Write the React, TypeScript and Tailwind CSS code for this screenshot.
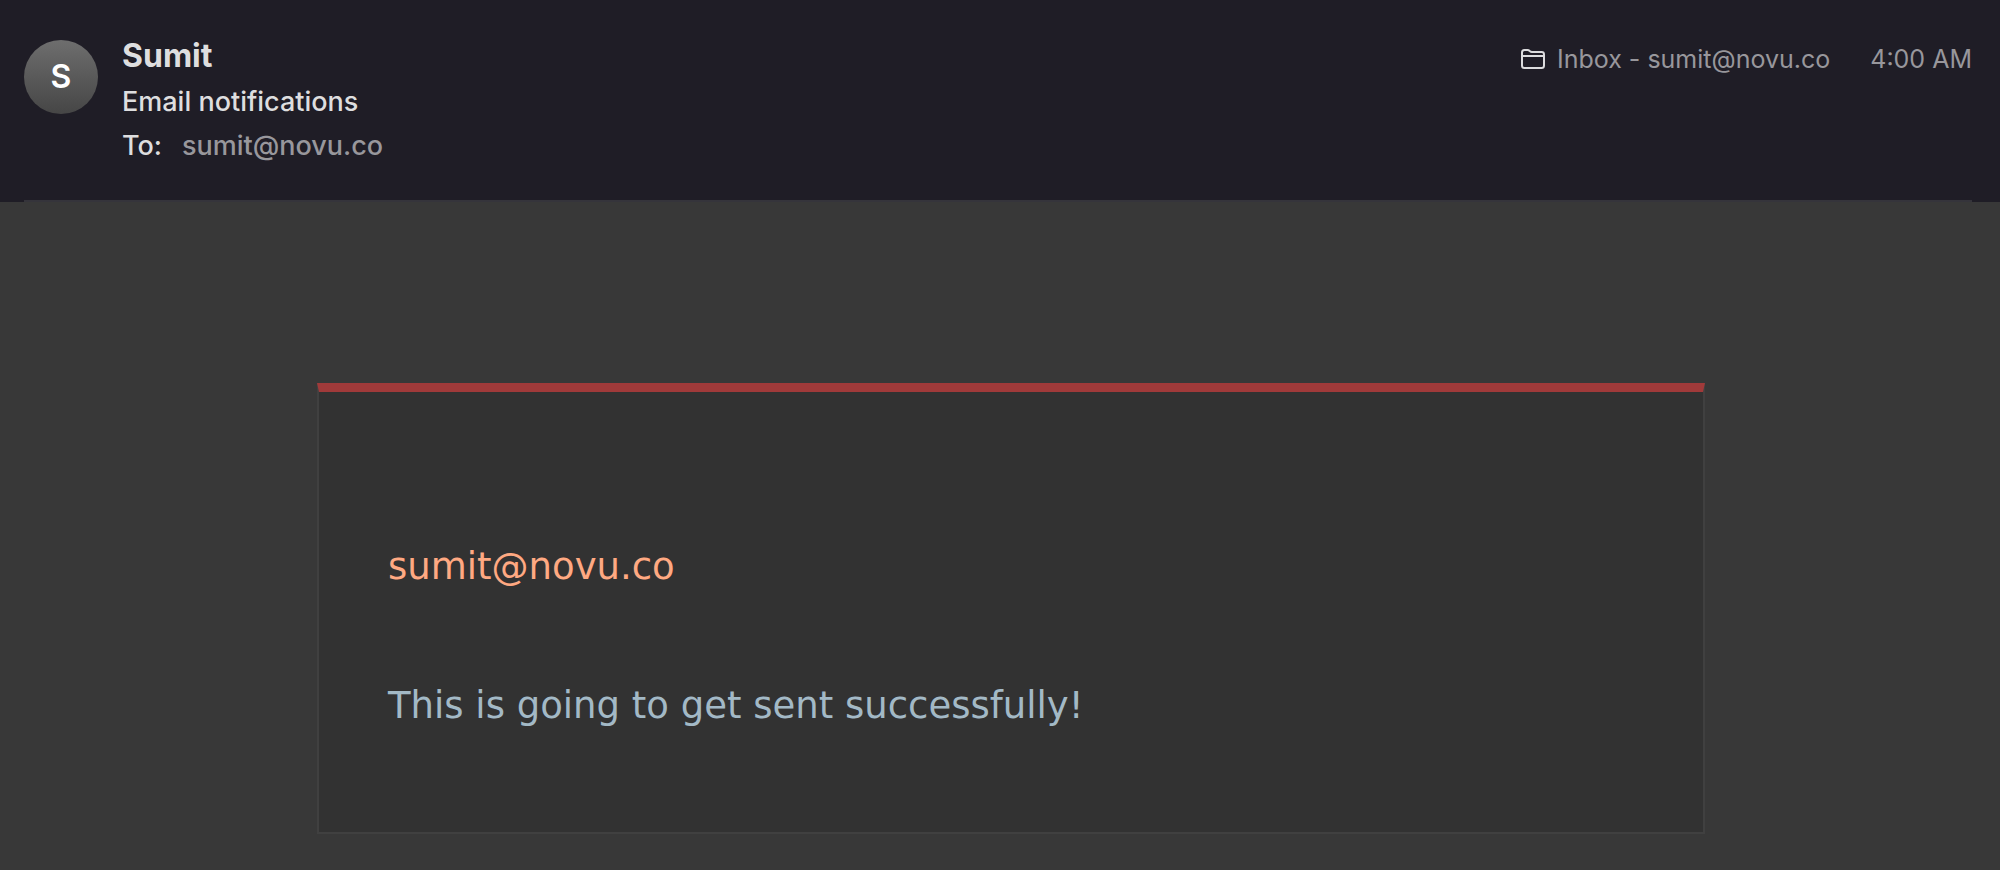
import React from "react";

function FolderIcon() {
  return (
    <svg
      className="h-5 w-6 shrink-0"
      viewBox="0 0 24 20"
      fill="none"
      stroke="#dcdcde"
      strokeWidth="2"
      strokeLinejoin="round"
      aria-hidden="true"
    >
      <path d="M1 16.5V3.6Q1 1 3.4 1H6.6Q7.6 1 8.4 1.8L9 2.3Q9.8 3 10.8 3H20.6Q23 3 23 5.4V16.5Q23 19 20.6 19H3.4Q1 19 1 16.5Z" />
      <path d="M1 7H23" />
    </svg>
  );
}

export default function App() {
  return (
    <div className="flex min-h-screen flex-col bg-[#383838] font-['Inter',sans-serif]">
      <header className="bg-[#1f1d26] px-6">
        <div className="flex items-start gap-6 pt-9">
          <div className="mt-1 flex size-[74px] shrink-0 items-center justify-center rounded-full bg-linear-to-b from-[#6e6e6e] to-[#464646] text-[32px] font-semibold text-white">
            S
          </div>
          <div className="flex-1 text-[#dededf]">
            <h1 className="text-[32px] leading-10 font-bold">Sumit</h1>
            <h2 className="mt-1 text-[27px] leading-11 font-medium">Email notifications</h2>
            <p className="flex gap-5 text-[27px] leading-11 font-medium">
              <span>To:</span>
              <a href="mailto:sumit@novu.co" className="text-[#98979c]">
                sumit@novu.co
              </a>
            </p>
          </div>
          <div className="mt-1 mr-1 flex items-center text-[25px] leading-[38px] text-[#98979c]">
            <FolderIcon />
            <span className="ml-3">Inbox - sumit@novu.co</span>
            <time className="ml-10">4:00 AM</time>
          </div>
        </div>
        <div className="mt-8 mr-1 h-0.5 bg-[#35343b]" />
      </header>
      <main className="flex-1 pt-[181px] pr-[295px] pb-9 pl-[317px]">
        <article className="border-2 border-t-9 border-[#404040] border-t-[#a03a3a] bg-[#323232] px-[69px] pt-[145px] pb-24 font-['DejaVu_Sans',sans-serif] text-[37px] leading-[60px]">
          <p className="text-[#ffa982]">sumit@novu.co</p>
          <p className="mt-[79px] text-[#a3b9c6]">This is going to get sent successfully!</p>
        </article>
      </main>
    </div>
  );
}
